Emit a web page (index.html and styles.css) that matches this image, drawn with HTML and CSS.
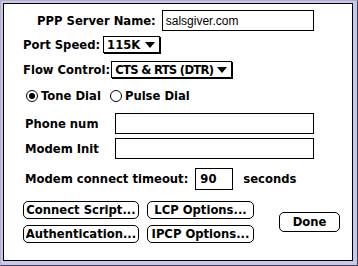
FILE: index.html
```html
<!DOCTYPE html>
<html>
<head>
<meta charset="utf-8">
<link rel="stylesheet" href="styles.css">
</head>
<body>
<div class="window">
  <div class="pane">
    <div class="row r1">
      <span class="label server-label">PPP Server Name:</span>
      <span class="field server-field">salsgiver.com</span>
    </div>
    <div class="row r2">
      <span class="label">Port Speed:</span>
      <span class="popup speed-popup">115K<span class="arrow"></span></span>
    </div>
    <div class="row r3">
      <span class="label">Flow Control:</span>
      <span class="popup flow-popup">CTS &amp; RTS (DTR)<span class="arrow"></span></span>
    </div>
    <div class="row r4">
      <span class="radio on"></span><span class="label radio-label">Tone Dial</span>
      <span class="radio off"></span><span class="label radio-label">Pulse Dial</span>
    </div>
    <div class="row r5">
      <span class="label field-label">Phone num</span>
      <span class="field wide-field"></span>
    </div>
    <div class="row r6">
      <span class="label field-label">Modem Init</span>
      <span class="field wide-field"></span>
    </div>
    <div class="row r7">
      <span class="label">Modem connect timeout:</span>
      <span class="field timeout-field">90</span>
      <span class="label seconds">seconds</span>
    </div>
    <div class="buttons">
      <span class="btn b-connect">Connect Script...</span>
      <span class="btn b-lcp">LCP Options...</span>
      <span class="btn b-done">Done</span>
      <span class="btn b-auth">Authentication...</span>
      <span class="btn b-ipcp">IPCP Options...</span>
    </div>
  </div>
</div>
</body>
</html>
```
FILE: styles.css
```css
html, body {
  margin: 0;
  padding: 0;
  background: #fff;
}
.window {
  width: 358px;
  height: 266px;
  box-sizing: border-box;
  border-style: solid;
  border-width: 1px;
  border-color: #b0b0c8 #404058 #404058 #b0b0c8;
  background: #c8c8ec;
  padding: 2px 4px 4px 2px;
  display: flex;
}
.pane {
  flex: 1;
  border: 1px solid #000;
  background: #fff;
  display: flex;
  flex-direction: column;
  padding-left: 19px;
  font-family: "DejaVu Sans", sans-serif;
  font-weight: bold;
  font-size: 11.6px;
  color: #000;
}
.row {
  display: flex;
  align-items: center;
}
.label {
  white-space: nowrap;
}
.field {
  box-sizing: border-box;
  border: 1px solid #000;
  height: 100%;
  display: flex;
  align-items: center;
  padding-left: 3px;
  font-family: "Liberation Sans", sans-serif;
  font-weight: normal;
  font-size: 12px;
}
.r1 { margin-top: 6px; height: 21px; }
.server-label { margin-left: 14px; }
.server-field { margin-left: 6px; width: 152px; }
.r2 { margin-top: 5px; height: 18px; }
.r3 { margin-top: 7px; height: 18px; }
.popup {
  box-sizing: border-box;
  height: 17px;
  border: 1px solid #000;
  box-shadow: 1px 1px 0 #000;
  display: flex;
  align-items: center;
  padding-left: 3px;
  margin-top: -1px;
  white-space: nowrap;
}
.speed-popup { margin-left: 3px; width: 57px; }
.flow-popup { margin-left: 1px; width: 121px; letter-spacing: -0.7px; }
.arrow {
  flex: none;
  width: 0;
  height: 0;
  border-left: 5px solid transparent;
  border-right: 5px solid transparent;
  border-top: 6px solid #000;
  margin-left: auto;
  margin-right: 4px;
}
.r4 { margin-top: 9px; height: 16px; padding-left: 3px; }
.radio {
  box-sizing: border-box;
  width: 12px;
  height: 12px;
  border: 1px solid #000;
  border-radius: 50%;
  display: flex;
  align-items: center;
  justify-content: center;
}
.radio.on::after {
  content: "";
  width: 6px;
  height: 6px;
  border-radius: 50%;
  background: #000;
}
.radio-label { margin-left: 3px; margin-right: 9px; }
.r5 { margin-top: 9px; height: 21px; padding-left: 2px; }
.r6 { margin-top: 4px; height: 21px; padding-left: 2px; }
.field-label { width: 90px; }
.wide-field { width: 199px; }
.r7 { margin-top: 9px; height: 22px; padding-left: 2px; }
.timeout-field { width: 38px; margin-left: 7px; padding-left: 4px; font-family: "DejaVu Sans", sans-serif; font-weight: bold; font-size: 11.6px; }
.seconds { margin-left: 10px; }
.buttons {
  margin-top: 11px;
  display: grid;
  grid-template-columns: 116px 107px 61px;
  grid-template-rows: 18px 18px;
  column-gap: 8px;
  row-gap: 6px;
}
.btn {
  box-sizing: border-box;
  border: 1px solid #000;
  border-radius: 5px;
  display: flex;
  align-items: center;
  justify-content: center;
  white-space: nowrap;
}
.b-done {
  grid-column: 3;
  grid-row: 1 / span 2;
  height: 20px;
  align-self: center;
  margin-left: 17px;
  width: 61px;
}
.b-auth { grid-column: 1; grid-row: 2; }
.b-ipcp { grid-column: 2; grid-row: 2; }
```
